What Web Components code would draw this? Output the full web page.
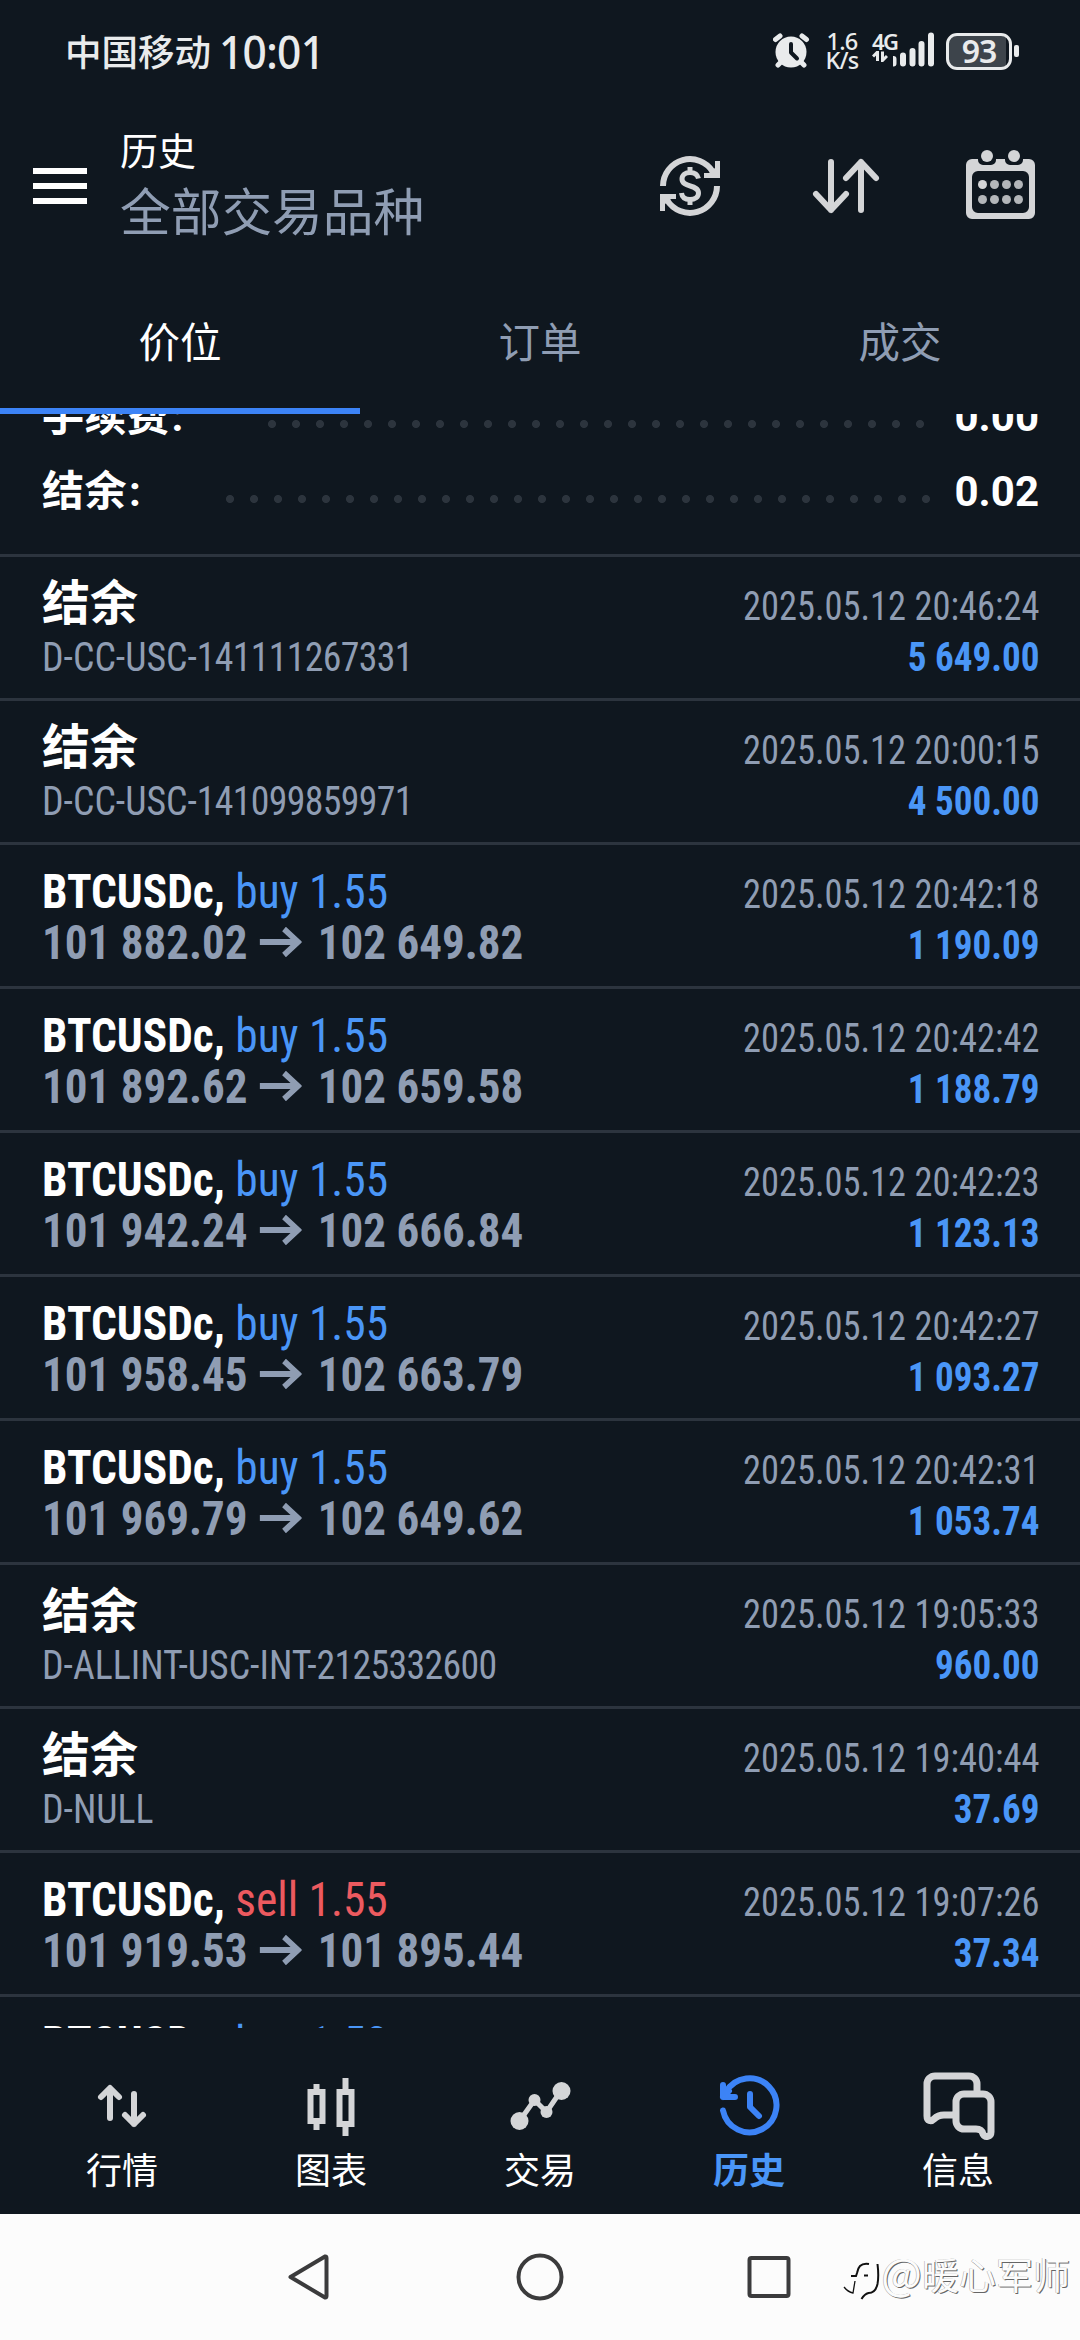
<!DOCTYPE html>
<html lang="zh-CN">
<head>
<meta charset="utf-8">
<title>历史</title>
<style>
    html, body { margin: 0; }
    body {
        --bg: #0f171f;
        --line: #2c343e;
        --muted: #8f9db3;
        --blue: #4a96f7;
        --accent: #3c83f6;
        --red: #ec5a5f;
        width: 1080px;
        height: 2340px;
        overflow: hidden;
        background: var(--bg);
        color: #fff;
        font-family: "Roboto Condensed", Roboto, "Noto Sans CJK SC", sans-serif;
    }
</style>
</head>
<body>
<history-app></history-app>

<script>
const CJK = `"Noto Sans CJK SC", sans-serif`;

// small base class: every element renders one template in an open root
class BaseElement extends HTMLElement {
    constructor() {
        super();
        this.shadow = this.attachShadow({mode: 'open'});
    }

    connectedCallback() {
        this.shadow.innerHTML = this.render();
    }

    attr(name) {
        return this.getAttribute(name) || '';
    }
}

class StatusBar extends BaseElement {
    render() {
        return `
        <style>
            :host { display: flex; align-items: center; height: 102px; padding: 0 61px 0 65px; color: #e9ebec; font-family: "Noto Sans", ${CJK}; }
            .carrier { font: 500 36.5px/50px ${CJK}; }
            .time { font-size: 45px; font-weight: 500; line-height: 50px; margin-left: 8px; letter-spacing: -0.7px; padding-top: 1px; transform: scaleX(.943); transform-origin: left; }
            .grow { flex: 1; }
            svg { display: block; flex: none; }
            .speed { display: flex; flex-direction: column; width: 36px; margin-left: 14px; align-items: center; font-size: 23.5px; font-weight: 500; line-height: 19px; letter-spacing: -0.8px; }
            .signal { display: flex; margin-left: 12px; height: 38px; }
            .net { width: 21px; font-size: 22px; font-weight: 600; line-height: 19px; letter-spacing: -1.5px; white-space: nowrap; }
            .battery { display: flex; margin-left: 12px; align-items: center; }
            .cell { box-sizing: border-box; width: 66px; height: 37px; border: 3px solid #e9ebec; border-radius: 11px; background: linear-gradient(90deg, #3d444b 57px, var(--bg) 57px); font-size: 32px; font-weight: 600; line-height: 30px; text-align: center; letter-spacing: -1px; }
            .nub { width: 5px; height: 12px; margin-left: 2px; border-radius: 2px; background: #e9ebec; }
        </style>
        <span class="carrier">中国移动</span><span class="time">10:01</span>
        <span class="grow"></span>
        <svg width="37" height="36" viewBox="771 34 37 36">
            <circle cx="789" cy="53" r="15.5" fill="#e9ebec"/>
            <path d="M773.5 40.500 778 37M804.500 40.500 800 37M779 63l-3 3M799 63l3 3" stroke="#e9ebec" stroke-width="5" stroke-linecap="round"/>
            <path d="M789 45v8.500l6 6" fill="none" stroke="#0f171f" stroke-width="4" stroke-linecap="round" stroke-linejoin="round"/>
        </svg>
        <span class="speed"><span>1.6</span><span>K/s</span></span>
        <span class="signal">
            <span class="net">4G
                <svg width="16" height="11" viewBox="871 57 16 11"><path d="M876.500 67v-9l-4.500 4.500M881.500 57.500v9l4.500-4.500" fill="none" stroke="#e9ebec" stroke-width="3"/></svg>
            </span>
            <svg width="41" height="36" viewBox="892 33 41 36"><path d="M892.500 60v4.500M902 56.500v8M911.500 52v12.500M920.500 45v19.500M930 36.500v28" stroke="#e9ebec" stroke-width="6" stroke-linecap="round" overflow="visible"/></svg>
        </span>
        <span class="battery"><span class="cell">93</span><span class="nub"></span></span>
        `;
    }
}
customElements.define('status-bar', StatusBar);

class AppHeader extends BaseElement {
    render() {
        return `
        <style>
            :host { display: flex; height: 180px; font-family: ${CJK}; }
            svg { display: block; flex: none; }
            .menu { margin: 66px 0 0 33px; }
            .titles { margin: 19px 0 0 33px; flex: 1; }
            .title { font-size: 38px; line-height: 56px; }
            .sub { font-size: 50.7px; line-height: 64px; color: var(--muted); }
            .sync { margin-top: 54px; }
            .sort { margin: 54px 0 0 93px; }
            .cal { margin: 45px 45px 0 87px; }
        </style>
        <svg class="menu" width="54" height="36" viewBox="0 0 54 36"><path d="M0 3h54M0 18h54M0 33h54" stroke="#fff" stroke-width="6"/></svg>
        <div class="titles">
            <div class="title"><slot name="title"></slot></div>
            <div class="sub"><slot name="sub"></slot></div>
        </div>
        <svg class="sync" width="60" height="60" viewBox="660 156 60 60" fill="none" stroke="#d4d5d7">
            <path d="M663 186a27 27 0 0 1 50-14M717 186a27 27 0 0 1-50 14" stroke-width="6"/>
            <path d="M720 161v17h-16v-5h5l6-5v-7zM660 211v-17h16v5h-5l-6 5v7z" fill="#d4d5d7" stroke="none"/>
            <path d="M698.500 178.500c-1-4-4-6-8.500-6s-8 2.500-8 6.500c0 9 16.500 5 16.500 14 0 4-3.500 6.500-8.500 6.500s-8-2.500-8.500-6.500M690 167v6M690 199v6" stroke-width="5"/>
        </svg>
        <svg class="sort" width="66" height="60" viewBox="813 156 66 60" fill="none" stroke="#d4d5d7" stroke-width="6" stroke-linecap="round" stroke-linejoin="round" overflow="visible">
            <path d="M831 162v48M816 194l15 16 15-16M861 210v-48M846 178l15-16 15 16"/>
        </svg>
        <svg class="cal" width="69" height="72" viewBox="966 147 69 72" fill="#d4d5d7" overflow="visible">
            <path fill-rule="evenodd" d="M972 159h57a6 6 0 0 1 6 6v48a6 6 0 0 1-6 6h-57a6 6 0 0 1-6-6v-48a6 6 0 0 1 6-6zM978 171a6 6 0 0 0-6 6v30a6 6 0 0 0 6 6h45a6 6 0 0 0 6-6v-30a6 6 0 0 0-6-6z"/>
            <path d="M978 153h18v7a5 5 0 0 1-5 5h-8a5 5 0 0 1-5-5zM1005 153h18v7a5 5 0 0 1-5 5h-8a5 5 0 0 1-5-5z" fill="#0f171f"/>
            <circle cx="987" cy="156" r="6"/><circle cx="1014" cy="156" r="6"/>
            <circle cx="982.500" cy="184.500" r="4.500"/>
            <g fill="#b3b6b9">
                <circle cx="994.500" cy="184.500" r="4.500"/><circle cx="1006.500" cy="184.500" r="4.500"/><circle cx="1018.500" cy="184.500" r="4.500"/>
                <circle cx="982.500" cy="199.500" r="4.500"/><circle cx="994.500" cy="199.500" r="4.500"/><circle cx="1006.500" cy="199.500" r="4.500"/><circle cx="1018.500" cy="199.500" r="4.500"/>
            </g>
        </svg>
        `;
    }
}
customElements.define('app-header', AppHeader);

class AppTabs extends BaseElement {
    render() {
        const tabs = this.attr('items').split(',');
        return `
        <style>
            :host { display: grid; grid-template-columns: repeat(3, 1fr); height: 132px; font: 41.5px/60px ${CJK}; }
            div { box-sizing: border-box; padding-top: 28px; text-align: center; color: var(--muted); border-bottom: 6px solid transparent; }
            .active { color: #fff; border-color: var(--accent); }
        </style>
        ${tabs.map((t, i) => `<div class="${i === 0 ? 'active' : ''}">${t}</div>`).join('')}
        `;
    }
}
customElements.define('app-tabs', AppTabs);

class SummaryRow extends BaseElement {
    render() {
        return `
        <style>
            :host { display: flex; flex: none; align-items: center; height: 75px; padding: 0 41px 0 42px; font: bold 42px/75px Roboto, ${CJK}; }
            .label { flex: 1; letter-spacing: 0.5px; }
            .label span { margin-left: 2px; }
            .dots { height: 24px; margin-top: 15px; background: radial-gradient(circle, #2c343d 3.6px, transparent 4.4px) 0 0 / 24px 24px; }
            .value { width: 101px; text-align: right; }
        </style>
        <span class="label">${this.attr('label')}<span>:</span></span>
        <span class="dots" style="width: ${this.attr('dots') * 24}px; margin-right: ${this.attr('gap') || 0}px"></span>
        <span class="value">${this.attr('value')}</span>
        `;
    }
}
customElements.define('summary-row', SummaryRow);

class HistoryRow extends BaseElement {
    render() {
        const side = this.attr('side');
        const title = side
            ? `<div class="deal"><b>BTCUSDc,</b> <span class="${side}">${side} ${this.attr('volume')}</span></div>`
            : `<div><b>结余</b></div>`;
        const comment = this.attr('comment').replace(/\d+/, '<span class="num">$&</span>');
        const detail = side
            ? `<div class="prices"><b>${this.attr('from')}</b><svg width="45" height="30" viewBox="0 0 45 30"><path d="M0 15h41M26 2l15 13-15 13" fill="none" stroke="#8f9db3" stroke-width="6"/></svg><b>${this.attr('to')}</b></div>`
            : `<div class="comment"><span class="small">${comment}</span></div>`;
        return `
        <style>
            :host { display: grid; grid-template-columns: 1fr auto; grid-auto-rows: 51px; box-sizing: border-box; flex: none; height: 144px; padding: 21px 41px 0 42px; border-bottom: 3px solid var(--line); font-size: 48px; line-height: 51px; }
            div { white-space: nowrap; transform-origin: left; }
            /* extra narrow cut of the condensed face */
            .deal { transform: scaleX(.946); }
            .prices { color: var(--muted); transform: scaleX(.938); }
            .comment { color: var(--muted); transform: scaleX(.945); }
            .num { letter-spacing: -0.7px; }
            .date { color: var(--muted); text-align: right; transform: scaleX(.911); transform-origin: right; }
            .amount { color: var(--blue); text-align: right; transform: scaleX(.927); transform-origin: right; }
            .small { font-size: 40px; line-height: 1; }
            .buy { color: var(--blue); }
            .sell { color: var(--red); }
            svg { margin: 0 17px 2px 13px; }
        </style>
        ${title}
        <div class="date"><span class="small">${this.attr('date')}</span></div>
        ${detail}
        <div class="amount"><b class="small">${this.attr('amount')}</b></div>
        `;
    }
}
customElements.define('history-row', HistoryRow);

const NAV_ICONS = {
    quotes: `<path d="M110 2118v-29M101 2097l9-9 9 9M134 2094v30M125 2115l9 9 9-9"/>`,
    chart: `<path d="M310.500 2092h12v29h-12zM339.500 2092h12v32h-12zM316.500 2084v6M316.500 2123v7M345.500 2078v12M345.500 2126v10" stroke-linecap="butt" stroke-linejoin="miter"/>`,
    trade: `<path d="M519 2121l15-21 12 12 15-22" stroke-width="5"/><g fill="#d4d5d7" stroke="none"><circle cx="519" cy="2121" r="9"/><circle cx="534" cy="2100" r="6"/><circle cx="546" cy="2112" r="6"/><circle cx="561" cy="2091" r="9"/></g>`,
    history: `<g stroke="#3c83f6"><path d="M722 2110.500a27 27 0 1 0 3-18.500M722 2085v12h12M722 2097l6-6M749 2094v13l9 9"/></g>`,
    chat: `<path d="M976 2090v-6a8 8 0 0 0-8-8h-34a8 8 0 0 0-8 8v32c0 5 4 6 7 3 3-3 6-4 10-4h8M963 2094h19a8 8 0 0 1 8 8v30c0 5-6 6-8 2-1-4-3-5-7-5h-12a8 8 0 0 1-8-8v-19a8 8 0 0 1 8-8z" stroke-width="7"/>`
};

class NavItem extends BaseElement {
    render() {
        const x = this.attr('x');
        return `
        <style>
            :host { display: flex; flex-direction: column; align-items: center; flex: 1; padding-top: 39px; font: 36px/54px ${CJK}; }
            :host([active]) { color: var(--blue); font-weight: bold; }
            svg { display: block; overflow: visible; margin-bottom: -4px; }
        </style>
        <svg width="80" height="78" viewBox="${x} 2067 80 78" fill="none" stroke="#d4d5d7" stroke-width="6" stroke-linecap="round" stroke-linejoin="round">${NAV_ICONS[this.attr('icon')]}</svg>
        <slot></slot>
        `;
    }
}
customElements.define('nav-item', NavItem);

class SystemBar extends BaseElement {
    render() {
        return `
        <style>
            :host { display: flex; height: 126px; background: #fcfcfc; }
            .keys { display: block; }
            .mark { position: absolute; right: 10px; top: 2246px; display: flex; align-items: center; color: #fcfcfc; font: 37px/56px ${CJK}; text-shadow: 1px 1px 0 #666, -0.5px -0.5px 0 #aaa; }
            .mark svg { margin: 4px 1px 0 0; overflow: visible; }
            .at { font-size: 43px; line-height: 1; }
        </style>
        <svg class="keys" width="1080" height="126" viewBox="0 2214 1080 126" fill="none" stroke="#3b3b3c" stroke-width="4" stroke-linejoin="round">
            <path d="M290.500 2277 325 2256.500q1.500-.5 1.500 1.500v38q0 2-1.500 1.500z"/>
            <circle cx="540" cy="2277" r="21.500"/>
            <rect x="749.500" y="2258" width="39" height="38" rx="2"/>
        </svg>
        <span class="mark">
            <svg width="37" height="42" viewBox="840 2259 37 42" fill="none" stroke="#111">
                <path d="M866 2268q-6-1-9 2-2 2-3 7l-1 3h-5" stroke-width="2"/>
                <path d="M852 2285l-2 12q-5-1-9-6" stroke-width="1.300"/>
                <path d="M874.500 2268q1.500 12 0 20-2 9-9 9-4 1-7 6" stroke-width="2"/>
                <path d="M861 2279.500h4" stroke-width="2"/>
            </svg>
            <span><span class="at">@</span>暖心军师</span>
        </span>
        `;
    }
}
customElements.define('system-bar', SystemBar);

const DEALS = [
    {comment: 'D-CC-USC-141111267331', date: '2025.05.12 20:46:24', amount: '5 649.00'},
    {comment: 'D-CC-USC-141099859971', date: '2025.05.12 20:00:15', amount: '4 500.00'},
    {side: 'buy', volume: '1.55', from: '101 882.02', to: '102 649.82', date: '2025.05.12 20:42:18', amount: '1 190.09'},
    {side: 'buy', volume: '1.55', from: '101 892.62', to: '102 659.58', date: '2025.05.12 20:42:42', amount: '1 188.79'},
    {side: 'buy', volume: '1.55', from: '101 942.24', to: '102 666.84', date: '2025.05.12 20:42:23', amount: '1 123.13'},
    {side: 'buy', volume: '1.55', from: '101 958.45', to: '102 663.79', date: '2025.05.12 20:42:27', amount: '1 093.27'},
    {side: 'buy', volume: '1.55', from: '101 969.79', to: '102 649.62', date: '2025.05.12 20:42:31', amount: '1 053.74'},
    {comment: 'D-ALLINT-USC-INT-2125332600', date: '2025.05.12 19:05:33', amount: '960.00'},
    {comment: 'D-NULL', date: '2025.05.12 19:40:44', amount: '37.69'},
    {side: 'sell', volume: '1.55', from: '101 919.53', to: '101 895.44', date: '2025.05.12 19:07:26', amount: '37.34'},
    {side: 'buy', volume: '1.53', from: '', to: '', date: '', amount: ''}
];

class HistoryApp extends BaseElement {
    render() {
        const rows = DEALS.map(d => {
            const attrs = Object.keys(d).map(k => `${k}="${d[k]}"`).join(' ');
            return `<history-row ${attrs}></history-row>`;
        }).join('');
        return `
        <style>
            :host { display: flex; flex-direction: column; height: 2340px; }
            .summary { display: flex; flex: none; flex-direction: column; justify-content: flex-end; box-sizing: border-box; height: 143px; padding-bottom: 25px; border-bottom: 3px solid var(--line); overflow: hidden; }
            .list { display: flex; flex-direction: column; height: 1471px; overflow: hidden; }
            nav { display: flex; height: 186px; padding: 0 17.5px; }
            status-bar, app-header, app-tabs, nav, system-bar { flex: none; box-sizing: border-box; }
        </style>
        <status-bar></status-bar>
        <app-header><span slot="title">历史</span><span slot="sub">全部交易品种</span></app-header>
        <app-tabs items="价位,订单,成交"></app-tabs>
        <div class="summary">
            <summary-row label="手续费" value="0.00" dots="28" gap="6"></summary-row>
            <summary-row label="结余" value="0.02" dots="30"></summary-row>
        </div>
        <div class="list">${rows}</div>
        <nav>
            <nav-item icon="quotes" x="82">行情</nav-item>
            <nav-item icon="chart" x="291">图表</nav-item>
            <nav-item icon="trade" x="499.500">交易</nav-item>
            <nav-item icon="history" x="708">历史</nav-item>
            <nav-item icon="chat" x="917">信息</nav-item>
        </nav>
        <system-bar></system-bar>
        `.replace('icon="history"', 'icon="history" active');
    }
}
customElements.define('history-app', HistoryApp);
</script>
</body>
</html>
